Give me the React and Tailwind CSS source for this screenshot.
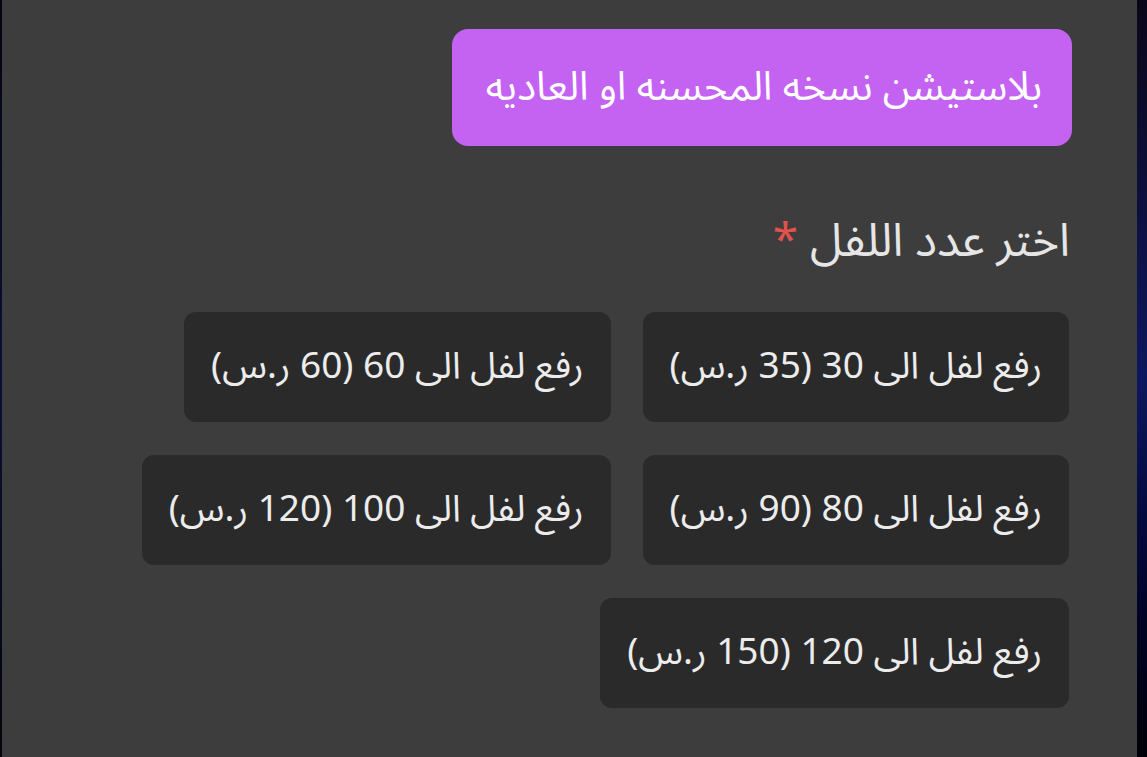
import React from "react";

const options = [
  ["رفع لفل الى 30 (35 ر.س)", "رفع لفل الى 60 (60 ر.س)"],
  ["رفع لفل الى 80 (90 ر.س)", "رفع لفل الى 100 (120 ر.س)"],
  ["رفع لفل الى 120 (150 ر.س)"],
];

export default function App() {
  const font = { fontFamily: '"Noto Sans Arabic", "Noto Sans", "DejaVu Sans", sans-serif' };
  return (
    <div className="flex h-[757px] w-[1147px] overflow-hidden bg-[#3d3d3d]" style={font}>
      <div className="w-[2px] bg-gradient-to-b from-[#05050f] via-[#0c0f3a] to-[#05050a]" />
      <div className="flex-1 pr-[65px] pt-[29px]" dir="rtl">
        <div className="flex">
          <div className="flex h-[117px] w-[620px] items-center rounded-[16px] bg-[#c462f2] px-[30px] text-[40px] text-white">
            بلاستيشن نسخه المحسنه او العاديه
          </div>
        </div>
        <div className="mt-[68px] pr-[2px] text-[46px] leading-[56px] text-[#e6e6e6]">
          اختر عدد اللفل <span className="text-[#e0524a]">*</span>
        </div>
        <div className="mt-[42px] flex flex-col gap-[33px] pr-[3px]">
          {options.map((row, i) => (
            <div key={i} className="flex gap-[32px]">
              {row.map((t) => (
                <div
                  key={t}
                  className="flex h-[110px] items-center rounded-[12px] bg-[#2a2a2a] px-[27px] text-[37px] text-[#ececec]"
                >
                  {t}
                </div>
              ))}
            </div>
          ))}
        </div>
      </div>
      <div className="w-[10px] bg-gradient-to-b from-[#0a0618] via-[#0d1760] to-[#000008]" />
    </div>
  );
}
